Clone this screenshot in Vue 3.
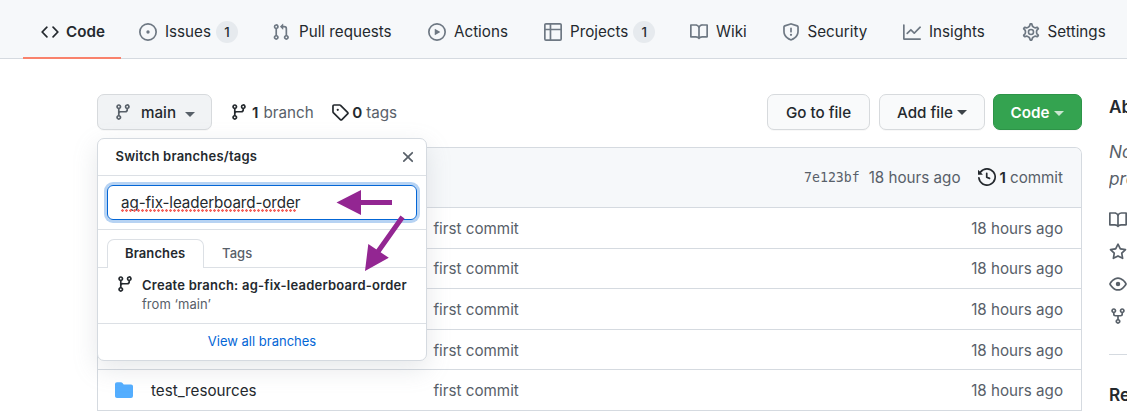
<script setup>
const icons = {
  code: 'M4.72 3.22a.75.75 0 011.06 1.06L2.06 8l3.72 3.72a.75.75 0 11-1.06 1.06L.47 8.53a.75.75 0 010-1.06l4.25-4.25zm6.56 0a.75.75 0 10-1.06 1.06L13.94 8l-3.72 3.72a.75.75 0 101.06 1.06l4.25-4.25a.75.75 0 000-1.06l-4.25-4.25z',
  issue: 'M8 9.5a1.5 1.5 0 100-3 1.5 1.5 0 000 3zM8 0a8 8 0 100 16A8 8 0 008 0zM1.5 8a6.5 6.5 0 1113 0 6.5 6.5 0 01-13 0z',
  pull: 'M7.177 3.073L9.573.677A.25.25 0 0110 .854v4.792a.25.25 0 01-.427.177L7.177 3.427a.25.25 0 010-.354zM3.75 2.5a.75.75 0 100 1.5.75.75 0 000-1.5zm-2.25.75a2.25 2.25 0 113 2.122v5.256a2.251 2.251 0 11-1.5 0V5.372A2.25 2.25 0 011.5 3.25zM11 2.5h-1V4h1a1 1 0 011 1v5.628a2.251 2.251 0 101.5 0V5A2.5 2.5 0 0011 2.5zm1 10.25a.75.75 0 111.5 0 .75.75 0 01-1.5 0zM3.75 12a.75.75 0 100 1.5.75.75 0 000-1.5z',
  play: 'M1.5 8a6.5 6.5 0 1113 0 6.5 6.5 0 01-13 0zM8 0a8 8 0 100 16A8 8 0 008 0zM6.379 5.227A.25.25 0 006 5.442v5.117a.25.25 0 00.379.214l4.264-2.559a.25.25 0 000-.428L6.379 5.227z',
  table: 'M0 1.75C0 .784.784 0 1.75 0h12.5C15.216 0 16 .784 16 1.75v12.5A1.75 1.75 0 0114.25 16H1.75A1.75 1.75 0 010 14.25V1.75zM1.5 6.5v7.75c0 .138.112.25.25.25H5v-8H1.5zM5 5H1.5V1.75a.25.25 0 01.25-.25H5V5zm1.5 1.5v8h7.75a.25.25 0 00.25-.25V6.5h-8zm8-1.5h-8V1.5h7.75a.25.25 0 01.25.25V5z',
  book: 'M0 1.75A.75.75 0 01.75 1h4.253c1.227 0 2.317.59 3 1.501A3.744 3.744 0 0111.006 1h4.245a.75.75 0 01.75.75v10.5a.75.75 0 01-.75.75h-4.507a2.25 2.25 0 00-1.591.659l-.622.621a.75.75 0 01-1.06 0l-.622-.621A2.25 2.25 0 005.258 13H.75a.75.75 0 01-.75-.75V1.75zm8.755 3a2.25 2.25 0 012.25-2.25H14.5v9h-3.757c-.71 0-1.4.201-1.992.572l.004-7.322zm-1.504 7.324l.004-5.073-.002-2.253A2.25 2.25 0 005.003 2.5H1.5v9h3.757a3.75 3.75 0 011.994.574z',
  shield: 'M7.467.133a1.75 1.75 0 011.066 0l5.25 1.68A1.75 1.75 0 0115 3.48V7c0 1.566-.32 3.182-1.303 4.682-.983 1.498-2.585 2.813-5.032 3.855a1.7 1.7 0 01-1.33 0c-2.447-1.042-4.049-2.357-5.032-3.855C1.32 10.182 1 8.566 1 7V3.48a1.75 1.75 0 011.217-1.667l5.25-1.68zm.61 1.429a.25.25 0 00-.153 0l-5.25 1.68a.25.25 0 00-.174.238V7c0 1.358.275 2.666 1.057 3.86.784 1.194 2.121 2.34 4.366 3.297a.2.2 0 00.154 0c2.245-.956 3.582-2.104 4.366-3.298C13.225 9.666 13.5 8.36 13.5 7V3.48a.25.25 0 00-.174-.237l-5.25-1.68zM9 10.5a1 1 0 11-2 0 1 1 0 012 0zm-.25-5.75a.75.75 0 10-1.5 0v3a.75.75 0 001.5 0v-3z',
  graph: 'M1.5 1.75a.75.75 0 00-1.5 0v12.5c0 .414.336.75.75.75h14.5a.75.75 0 000-1.5H1.5V1.75zm14.28 2.53a.75.75 0 00-1.06-1.06L10 7.94 7.53 5.47a.75.75 0 00-1.06 0L3.22 8.72a.75.75 0 001.06 1.06L7 7.06l2.47 2.47a.75.75 0 001.06 0l5.25-5.25z',
  gear: 'M7.429 1.525a6.593 6.593 0 011.142 0c.036.003.108.036.137.146l.289 1.105c.147.56.55.967.997 1.189.174.086.341.183.501.29.417.278.97.423 1.53.27l1.102-.303c.11-.03.175.016.195.046.219.31.41.641.573.989.014.031.022.11-.059.19l-.815.806c-.411.406-.562.957-.53 1.456a4.588 4.588 0 010 .582c-.032.499.119 1.05.53 1.456l.815.806c.08.08.073.159.059.19a6.494 6.494 0 01-.573.99c-.02.029-.086.074-.195.045l-1.103-.303c-.559-.153-1.112-.008-1.529.27-.16.107-.327.204-.5.29-.449.222-.851.628-.998 1.189l-.289 1.105c-.029.11-.101.143-.137.146a6.613 6.613 0 01-1.142 0c-.036-.003-.108-.037-.137-.146l-.289-1.105c-.147-.56-.55-.967-.997-1.189a4.502 4.502 0 01-.501-.29c-.417-.278-.97-.423-1.53-.27l-1.102.303c-.11.03-.175-.016-.195-.046a6.492 6.492 0 01-.573-.989c-.014-.031-.022-.11.059-.19l.815-.806c.411-.406.562-.957.53-1.456a4.587 4.587 0 010-.582c.032-.499-.119-1.05-.53-1.456l-.815-.806c-.08-.08-.073-.159-.059-.19a6.44 6.44 0 01.573-.99c.02-.029.086-.075.195-.045l1.103.303c.559.153 1.112.008 1.529-.27.16-.107.327-.204.5-.29.449-.222.851-.628.998-1.189l.289-1.105c.029-.11.101-.143.137-.146z',
  branch: 'M11.75 2.5a.75.75 0 100 1.5.75.75 0 000-1.5zm-2.25.75a2.25 2.25 0 113 2.122V6A2.5 2.5 0 0110 8.5H6a1 1 0 00-1 1v1.128a2.251 2.251 0 11-1.5 0V5.372a2.25 2.25 0 111.5 0v1.836A2.492 2.492 0 016 7h4a1 1 0 001-1v-.628A2.25 2.25 0 019.5 3.25zM4.25 12a.75.75 0 100 1.5.75.75 0 000-1.5zM3.5 3.25a.75.75 0 111.5 0 .75.75 0 01-1.5 0z',
  tag: 'M2.5 7.775V2.75a.25.25 0 01.25-.25h5.025a.25.25 0 01.177.073l6.25 6.25a.25.25 0 010 .354l-5.025 5.025a.25.25 0 01-.354 0l-6.25-6.25a.25.25 0 01-.073-.177zm-1.5 0V2.75C1 1.784 1.784 1 2.75 1h5.025c.464 0 .91.184 1.238.513l6.25 6.25a1.75 1.75 0 010 2.474l-5.026 5.026a1.75 1.75 0 01-2.474 0l-6.25-6.25A1.75 1.75 0 011 7.775zM6 5a1 1 0 100 2 1 1 0 000-2z',
  close: 'M3.72 3.72a.75.75 0 011.06 0L8 6.94l3.22-3.22a.75.75 0 111.06 1.06L9.06 8l3.22 3.22a.75.75 0 11-1.06 1.06L8 9.06l-3.22 3.22a.75.75 0 01-1.06-1.06L6.94 8 3.72 4.78a.75.75 0 010-1.06z',
  history: 'M1.643 3.143L.427 1.927A.25.25 0 000 2.104V5.75c0 .138.112.25.25.25h3.646a.25.25 0 00.177-.427L2.715 4.215a6.5 6.5 0 11-1.18 4.458.75.75 0 10-1.493.154 8.001 8.001 0 101.6-5.684zM7.75 4a.75.75 0 01.75.75v2.992l2.028.812a.75.75 0 01-.557 1.392l-2.5-1A.75.75 0 017 8.25v-3.5A.75.75 0 017.75 4z',
  folder: 'M1.75 1A1.75 1.75 0 000 2.75v10.5C0 14.216.784 15 1.75 15h12.5A1.75 1.75 0 0016 13.25v-8.5A1.75 1.75 0 0014.25 3h-6.5a.25.25 0 01-.2-.1l-.9-1.2c-.33-.44-.85-.7-1.4-.7h-3.5z',
  star: 'M8 .25a.75.75 0 01.673.418l1.882 3.815 4.21.612a.75.75 0 01.416 1.279l-3.046 2.97.719 4.192a.75.75 0 01-1.088.791L8 12.347l-3.766 1.98a.75.75 0 01-1.088-.79l.72-4.194L.818 6.374a.75.75 0 01.416-1.28l4.21-.611L7.327.668A.75.75 0 018 .25zm0 2.445L6.615 5.5a.75.75 0 01-.564.41l-3.097.45 2.24 2.184a.75.75 0 01.216.664l-.528 3.084 2.769-1.456a.75.75 0 01.698 0l2.77 1.456-.53-3.084a.75.75 0 01.216-.664l2.24-2.183-3.096-.45a.75.75 0 01-.564-.41L8 2.694v.001z',
  eye: 'M1.679 7.932c.412-.621 1.242-1.75 2.366-2.717C5.175 4.242 6.527 3.5 8 3.5c1.473 0 2.824.742 3.955 1.715 1.124.967 1.954 2.096 2.366 2.717a.119.119 0 010 .136c-.412.621-1.242 1.75-2.366 2.717C10.825 11.758 9.473 12.5 8 12.5c-1.473 0-2.824-.742-3.955-1.715C2.92 9.818 2.09 8.69 1.679 8.068a.119.119 0 010-.136zM8 2c-1.981 0-3.67.992-4.933 2.078C1.797 5.169.88 6.423.43 7.1a1.619 1.619 0 000 1.798c.45.678 1.367 1.932 2.637 3.024C4.329 13.008 6.019 14 8 14c1.981 0 3.67-.992 4.933-2.078 1.27-1.091 2.187-2.345 2.637-3.023a1.619 1.619 0 000-1.798c-.45-.678-1.367-1.932-2.637-3.023C11.671 2.992 9.981 2 8 2zm0 8a2 2 0 100-4 2 2 0 000 4z',
  fork: 'M5 3.25a.75.75 0 11-1.5 0 .75.75 0 011.5 0zm0 2.122a2.25 2.25 0 10-1.5 0v.878A2.25 2.25 0 005.75 8.5h1.5v2.128a2.251 2.251 0 101.5 0V8.5h1.5a2.25 2.25 0 002.25-2.25v-.878a2.25 2.25 0 10-1.5 0v.878a.75.75 0 01-.75.75h-4.5A.75.75 0 015 6.25v-.878zm3.75 7.378a.75.75 0 11-1.5 0 .75.75 0 011.5 0zm3-8.75a.75.75 0 100-1.5.75.75 0 000 1.5z',
}
const tabs = [
  { name: 'Code', icon: 'code', active: true },
  { name: 'Issues', icon: 'issue', count: 1 },
  { name: 'Pull requests', icon: 'pull' },
  { name: 'Actions', icon: 'play' },
  { name: 'Projects', icon: 'table', count: 1 },
  { name: 'Wiki', icon: 'book' },
  { name: 'Security', icon: 'shield' },
  { name: 'Insights', icon: 'graph' },
  { name: 'Settings', icon: 'gear' },
]
const rows = ['', '', '', '', 'test_resources']
const meta = ['book', 'star', 'eye', 'fork']
</script>

<template>
  <div class="page">
    <nav class="nav">
      <a v-for="t in tabs" :key="t.name" class="tab" :class="{ active: t.active }">
        <svg v-if="t.icon === 'gear'" class="icon" viewBox="0 0 16 16">
          <path class="gear" transform="translate(8 8) scale(1.1) translate(-8 -8)" :d="icons.gear" />
          <circle class="gear" cx="8" cy="8" r="2.25" />
        </svg>
        <svg v-else class="icon" viewBox="0 0 16 16"><path fill-rule="evenodd" :d="icons[t.icon]" /></svg>
        <span class="label">{{ t.name }}</span>
        <span v-if="t.count" class="count">{{ t.count }}</span>
      </a>
    </nav>

    <div class="layout">
      <main class="main">
        <div class="toolbar">
          <button class="btn branch-btn">
            <svg class="icon" viewBox="0 0 16 16"><path fill-rule="evenodd" :d="icons.branch" /></svg>
            <span>main</span><i class="caret"></i>
          </button>
          <a class="stat branches"><svg class="icon" viewBox="0 0 16 16"><path fill-rule="evenodd" :d="icons.branch" /></svg><b>1</b><span>branch</span></a>
          <a class="stat tags"><svg class="icon" viewBox="0 0 16 16"><path fill-rule="evenodd" :d="icons.tag" /></svg><b>0</b><span>tags</span></a>
          <span class="spacer"></span>
          <button class="btn goto"><span>Go to file</span></button>
          <button class="btn add"><span>Add file</span><i class="caret"></i></button>
          <button class="btn clone"><span>Code</span><i class="caret"></i></button>
        </div>

        <div class="files">
          <div class="commit-bar">
            <code>7e123bf</code>
            <span class="when">18 hours ago</span>
            <svg class="icon" viewBox="0 0 16 16"><path fill-rule="evenodd" :d="icons.history" /></svg>
            <b>1</b><span>commit</span>
          </div>
          <div v-for="(name, i) in rows" :key="i" class="row">
            <div class="name">
              <template v-if="name">
                <svg class="icon folder" viewBox="0 0 16 16"><path :d="icons.folder" /></svg>
                <span>{{ name }}</span>
              </template>
            </div>
            <span class="message">first commit</span>
            <span class="age">18 hours ago</span>
          </div>
        </div>

        <section class="menu">
          <header class="menu-head">
            <span>Switch branches/tags</span>
            <svg class="close" viewBox="0 0 16 16"><path :d="icons.close" /></svg>
          </header>
          <div class="filter">
            <div class="field"><span class="typed">ag-fix-leaderboard-order</span></div>
          </div>
          <div class="menu-tabs">
            <span class="menu-tab selected">Branches</span>
            <span class="menu-tab">Tags</span>
          </div>
          <div class="create">
            <svg class="icon" viewBox="0 0 16 16"><path fill-rule="evenodd" :d="icons.branch" /></svg>
            <div>
              <div class="create-title">Create branch: ag-fix-leaderboard-order</div>
              <div class="create-from">from ‘main’</div>
            </div>
          </div>
          <a class="view-all">View all branches</a>
        </section>
      </main>

      <aside class="side">
        <h2 class="about">Ab</h2>
        <p class="desc">No<br>pro</p>
        <div class="meta">
          <svg v-for="m in meta" :key="m" class="icon" viewBox="0 0 16 16"><path fill-rule="evenodd" :d="icons[m]" /></svg>
        </div>
        <h2 class="releases">Re</h2>
      </aside>
    </div>

    <svg class="arrows" viewBox="0 0 1127 411">
      <path class="shaft" d="M392 202.5H360M402.5 217L377 253" />
      <path d="M336.5 202.5L361 190v25zM365 271l3.3-27 20.5 13.8z" />
    </svg>
  </div>
</template>

<style>
body { margin: 0; background: #fff; }
</style>

<style scoped>
.page { position: relative; width: 1127px; height: 411px; overflow: hidden; box-sizing: border-box; font: 15.2px/24px Inter, "Liberation Sans", sans-serif; color: #24292e; white-space: nowrap; background: #fff; }
.page * { box-sizing: border-box; }
.icon { width: 18px; height: 18px; flex: none; fill: currentColor; }
.nav { display: grid; grid-template-columns: 98px 133px 156px 116px 146px 91.5px 121.5px 118.5px 130px; height: 59px; padding-left: 23px; background: #f6f8fa; border-bottom: 1px solid #d5dae0; }
.tab { display: flex; align-items: center; height: 59px; padding: 7px 0 0 18px; border-bottom: 2px solid transparent; }
.tab.active { font-weight: 600; border-color: #f9826c; }
.tab .icon { color: #6e7883; margin-right: 8px; }
.tab:nth-child(3) .icon { margin-right: 9px; }
.tab.active .icon { color: #24292e; margin-right: 7px; }
.gear { fill: none; stroke: currentColor; stroke-width: 1.4; }
.count { width: 22px; height: 22px; margin-left: 5px; border-radius: 11px; background: #e6eaee; font-size: 13.2px; font-weight: 500; line-height: 22px; text-align: center; }

.layout { display: grid; grid-template-columns: 985px 18px; column-gap: 27px; padding: 35px 0 0 97px; }
.main { position: relative; }
.toolbar { display: flex; align-items: center; height: 36px; }
.btn { display: flex; align-items: center; justify-content: center; height: 36px; padding: 0; border: 1px solid #d7dadd; border-radius: 7px; background: #f9fafb; color: #24292e; font: 500 15.2px/24px Inter, "Liberation Sans", sans-serif; box-shadow: 0 1px 0 rgba(27, 31, 35, .03); }
.btn span, .stat span, .stat b { padding-top: 2px; }
.caret { border: 5px solid transparent; border-top-color: currentColor; border-bottom: 0; margin-left: 5px; }
.branch-btn { width: 115px; background: #f1f3f5; }
.branch-btn .icon { color: #586069; margin-right: 9px; }
.branch-btn .caret { margin: 4px 0 0 9px; color: #586069; }
.stat { display: flex; align-items: center; color: #586069; }
.stat .icon, .stat b { color: #24292e; }
.stat b { font-weight: 600; margin: 0 5px 0 4px; }
.branches { margin-left: 18px; }
.tags { margin-left: 17.5px; }
.tags b { margin: 0 4px 0 3px; }
.spacer { flex: 1; }
.goto { width: 103px; }
.add { width: 106px; margin-left: 9px; }
.add .caret { margin-left: 4px; color: #3d4349; }
.clone { width: 89px; margin-left: 8px; background: #34a350; border-color: #2d9448; color: #fff; font-weight: 600; }
.clone .caret { color: #c9e6d0; margin-top: 3px; }

.files { margin-top: 17px; border: 1px solid #d5dae0; border-bottom: 0; border-radius: 7px 7px 0 0; overflow: hidden; color: #586069; }
.commit-bar { display: flex; align-items: center; justify-content: flex-end; height: 60px; padding-right: 18px; background: #f6f8fa; border-bottom: 1px solid #d5dae0; }
.commit-bar code { font: 13.2px "DejaVu Sans Mono", monospace; margin-right: 9px; }
.commit-bar .when { margin-right: 17px; }
.commit-bar .icon { color: #24292e; margin: -2px 4px 0 0; }
.commit-bar b { font-weight: 600; color: #24292e; margin-right: 4px; }
.row { display: grid; grid-template-columns: 335.5px 1fr auto; align-items: center; height: 40.6px; padding-right: 18px; border-bottom: 1px solid #d5dae0; }
.row span { padding-top: 2px; }
.name { display: flex; align-items: center; padding-left: 17px; color: #24292e; }
.folder { color: #54aeff; margin-right: 18px; }

.menu { position: absolute; top: 44px; left: 0; width: 330px; height: 223px; border: 1px solid #d5dae0; border-radius: 7px; background: #fff; box-shadow: 0 8px 24px rgba(140, 149, 159, .22); font-size: 13px; line-height: 20px; }
.menu-head { display: flex; align-items: center; justify-content: space-between; height: 37px; padding: 0 9px 0 17.5px; border-bottom: 1px solid #dce0e5; font-weight: 600; letter-spacing: .22px; }
.menu-head span { padding-bottom: 2px; }
.close { width: 18px; height: 18px; fill: #586069; }
.filter { height: 54px; padding: 9px; border-bottom: 1px solid #dce0e5; }
.field { display: flex; align-items: center; height: 35px; padding-left: 13px; border: 1px solid #0366d6; border-radius: 6px; box-shadow: 0 0 0 3px #b7d3f3; font-size: 15.2px; letter-spacing: -.1px; }
.typed { position: relative; }
.typed::after { content: ''; position: absolute; left: 0; right: 3px; bottom: 1px; height: 3px; background: radial-gradient(circle at 1.5px 1.5px, #f4645f 1.1px, transparent 1.5px) 0 0 / 4px 3px repeat-x; }
.menu-tabs { display: flex; height: 38px; padding: 9px 9px 0; border-bottom: 1px solid #dce0e5; color: #586069; font-weight: 500; }
.menu-tab { height: 29px; padding: 4px 18px; letter-spacing: .1px; }
.menu-tab.selected { width: 97px; padding: 3px 17px; border: 1px solid #dce0e5; border-bottom: 0; border-radius: 7px 7px 0 0; background: #fff; color: #24292e; font-weight: 600; }
.create { display: flex; height: 56px; padding: 8px 0 0 18px; border-bottom: 1px solid #dce0e5; }
.create .icon { margin: -1px 8px 0 0; }
.create-title { font-weight: 600; line-height: 19px; letter-spacing: .22px; }
.create-from { color: #586069; line-height: 19px; letter-spacing: .05px; }
.view-all { display: block; padding-top: 7px; text-align: center; color: #0366d6; }

.side { overflow: hidden; height: 317px; color: #586069; }
.about, .releases { margin: 0; font-size: 17.2px; line-height: 24px; font-weight: 600; color: #24292e; }
.about { padding-top: 1px; }
.desc { margin: 19px 0 0; font-size: 17.2px; line-height: 27px; font-style: italic; }
.meta { display: flex; flex-direction: column; gap: 14px; margin-top: 19px; height: 144px; border-bottom: 1px solid #d5dae0; }
.releases { margin-top: 28px; }
.arrows { position: absolute; inset: 0; width: 1127px; height: 411px; fill: #932692; }
.shaft { fill: none; stroke: #932692; stroke-width: 5; }
</style>
